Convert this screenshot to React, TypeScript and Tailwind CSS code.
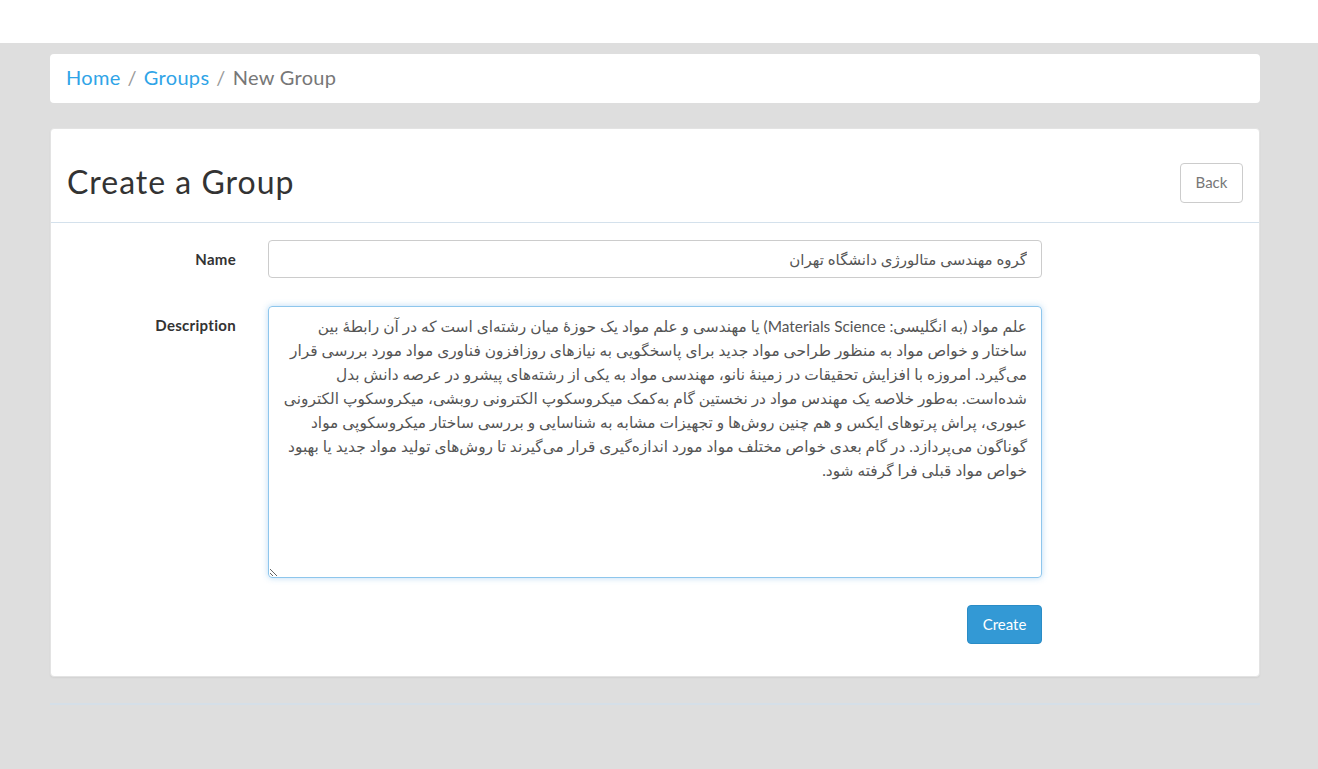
const description =
  "علم مواد (به انگلیسی: Materials Science) یا مهندسی و علم مواد یک حوزهٔ میان رشته‌ای است که در آن رابطهٔ بین ساختار و خواص مواد به منظور طراحی مواد جدید برای پاسخگویی به نیازهای روزافزون فناوری مواد مورد بررسی قرار می‌گیرد. امروزه با افزایش تحقیقات در زمینهٔ نانو، مهندسی مواد به یکی از رشته‌های پیشرو در عرصه دانش بدل شده‌است. به‌طور خلاصه یک مهندس مواد در نخستین گام به‌کمک میکروسکوپ الکترونی روبشی، میکروسکوپ الکترونی عبوری، پراش پرتوهای ایکس و هم چنین روش‌ها و تجهیزات مشابه به شناسایی و بررسی ساختار میکروسکوپی مواد گوناگون می‌پردازد. در گام بعدی خواص مختلف مواد مورد اندازه‌گیری قرار می‌گیرند تا روش‌های تولید مواد جدید یا بهبود خواص مواد قبلی فرا گرفته شود.";

const App = (): React.ReactElement => {
  return (
    <div className="min-h-[769px] bg-[#dedede] font-['Lato','DejaVu_Sans',sans-serif] text-[#555]">
      <div className="h-[43px] bg-white" />
      <div className="ml-[50px] w-[1210px] pt-[11px]">
        <div className="h-[49px] bg-white rounded flex items-center px-4 pb-[3px] text-[20px] tracking-[0.3px] text-[#777]">
          <a href="#" className="text-[#2fa4e7]">Home</a>
          <span className="px-[7px] text-[#999]">/</span>
          <a href="#" className="text-[#2fa4e7]">Groups</a>
          <span className="px-[7px] text-[#999]">/</span>
          <span>New Group</span>
        </div>

        <div className="mt-[25px] bg-white rounded border border-[#e3e3e3] shadow-[0_1px_2px_rgba(0,0,0,0.06)]">
          <div className="h-[94px] flex items-center justify-between pl-4 pr-4 pt-[12px] border-b border-[#d4e1ec]">
            <h1 className="text-[32px] text-[#333] tracking-[1px]">Create a Group</h1>
            <button
              type="button"
              className="h-10 w-[63px] mt-[2px] rounded border border-[#ccc] text-[15px] text-[#777] bg-white"
            >
              Back
            </button>
          </div>

          <div className="pt-[17px] pb-[32px]">
            <div className="flex items-center">
              <label className="w-[185px] text-right text-[15px] font-bold text-[#333] tracking-[0.3px]">Name</label>
              <input
                type="text"
                dir="rtl"
                defaultValue="گروه مهندسی متالورژی دانشگاه تهران"
                className="ml-[32px] w-[774px] h-[38px] rounded border border-[#ccc] px-[14px] text-[15px] text-[#555] outline-none"
              />
            </div>

            <div className="flex items-start mt-[28px]">
              <label className="w-[185px] text-right text-[15px] font-bold text-[#333] tracking-[0.3px] pt-[8px]">Description</label>
              <textarea
                dir="rtl"
                defaultValue={description}
                className="ml-[32px] w-[774px] h-[272px] rounded border border-[#8ec6ec] shadow-[0_0_6px_rgba(102,175,233,0.45)] px-[14px] py-[7px] text-[15.4px] leading-[24px] text-[#555] outline-none"
              />
            </div>

            <div className="flex justify-end w-[991px] mt-[27px]">
              <button
                type="button"
                className="h-[39px] w-[75px] rounded bg-[#3399d5] border border-[#2a8cc6] text-white text-[15px]"
              >
                Create
              </button>
            </div>
          </div>
        </div>

        <div className="mt-[26px] h-[2px] bg-[#d5dfe8]" />
      </div>
    </div>
  );
};

export default App;
